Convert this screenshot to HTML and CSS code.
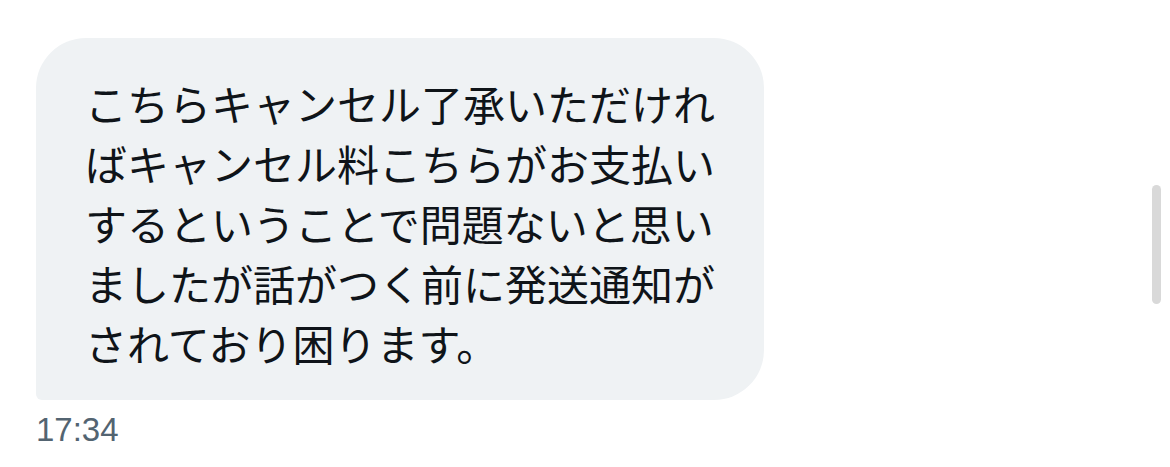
FILE: index.html
```html
<!DOCTYPE html>
<html lang="ja">
<head>
<meta charset="utf-8">
<link rel="stylesheet" href="styles.css">
</head>
<body>
<main class="thread">
  <div class="message">
    <div class="bubble">こちらキャンセル了承いただけれ<br>ばキャンセル料こちらがお支払い<br>するということで問題ないと思い<br>ましたが話がつく前に発送通知が<br>されており困ります。</div>
    <div class="time">17:34</div>
  </div>
</main>
<div class="scrollbar"></div>
</body>
</html>
```
FILE: styles.css
```css
html, body {
  margin: 0;
  padding: 0;
  background: #ffffff;
}
body {
  width: 1170px;
  height: 467px;
  overflow: hidden;
  position: relative;
}
.thread {
  padding: 38px 0 0 36px;
}
.message {
  display: flex;
  flex-direction: column;
  align-items: flex-start;
}
.bubble {
  box-sizing: border-box;
  width: 728px;
  height: 362px;
  background: #eff2f4;
  border-radius: 50px 50px 50px 6px;
  padding: 35px 20px 27px 49px;
  font-family: "Noto Sans CJK JP", "Noto Sans", sans-serif;
  font-size: 42px;
  line-height: 60px;
  color: #0f1419;
  white-space: nowrap;
}
.time {
  margin-top: 12px;
  font-family: "Liberation Sans", Arial, sans-serif;
  font-size: 33px;
  line-height: 36px;
  color: #536471;
}
.scrollbar {
  position: absolute;
  left: 1152px;
  top: 185px;
  width: 9px;
  height: 119px;
  border-radius: 5px;
  background: #d9d9d9;
}
```
